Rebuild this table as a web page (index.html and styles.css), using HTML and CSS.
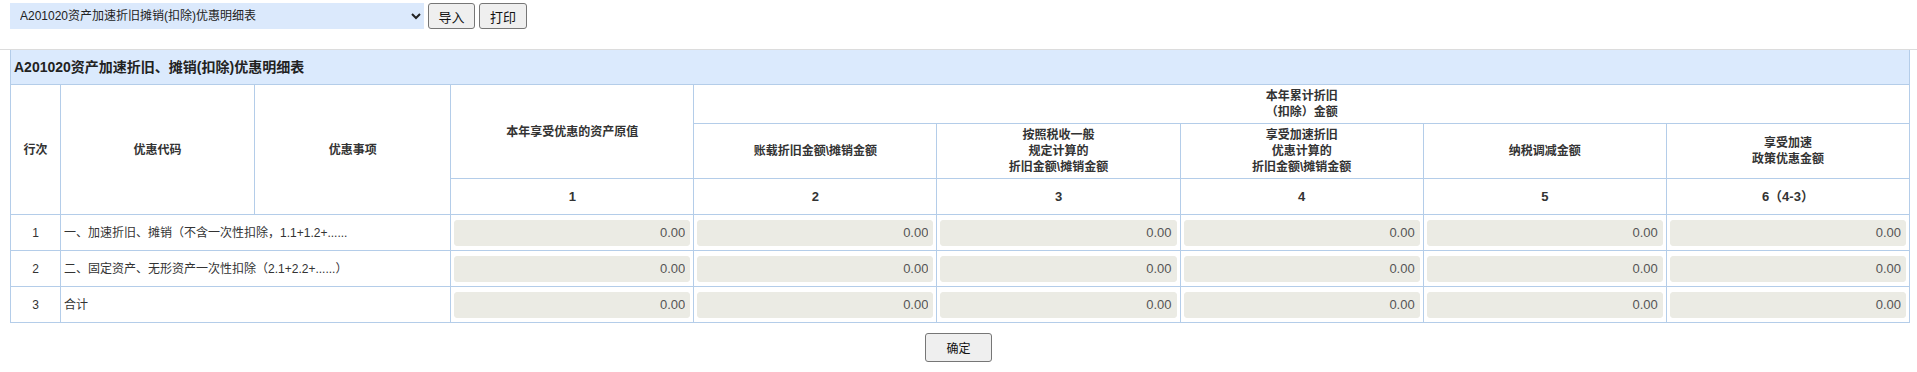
FILE: index.html
```html
<!DOCTYPE html>
<html lang="zh-CN">
<head>
<meta charset="utf-8">
<title>A201020资产加速折旧、摊销(扣除)优惠明细表</title>
<link rel="stylesheet" href="styles.css">
</head>
<body>
<div class="toolbar">
  <select class="form-select">
    <option>A201020资产加速折旧摊销(扣除)优惠明细表</option>
  </select>
  <button class="btn btn-import" type="button">导入</button>
  <button class="btn btn-print" type="button">打印</button>
</div>
<div class="sheet">
  <table class="grid">
    <colgroup>
      <col class="c-no">
      <col class="c-code">
      <col class="c-item">
      <col class="c-num">
      <col class="c-num">
      <col class="c-num">
      <col class="c-num">
      <col class="c-num">
      <col class="c-num">
    </colgroup>
    <thead>
      <tr class="r-title">
        <th colspan="9" class="title">A201020资产加速折旧、摊销(扣除)优惠明细表</th>
      </tr>
      <tr class="r-h1">
        <th rowspan="3">行次</th>
        <th rowspan="3">优惠代码</th>
        <th rowspan="3">优惠事项</th>
        <th rowspan="2">本年享受优惠的资产原值</th>
        <th colspan="5">本年累计折旧<br>（扣除）金额</th>
      </tr>
      <tr class="r-h2">
        <th>账载折旧金额\摊销金额</th>
        <th>按照税收一般<br>规定计算的<br>折旧金额\摊销金额</th>
        <th>享受加速折旧<br>优惠计算的<br>折旧金额\摊销金额</th>
        <th>纳税调减金额</th>
        <th>享受加速<br>政策优惠金额</th>
      </tr>
      <tr class="r-h3">
        <th>1</th>
        <th>2</th>
        <th>3</th>
        <th>4</th>
        <th>5</th>
        <th>6（4-3）</th>
      </tr>
    </thead>
    <tbody>
      <tr class="r-data">
        <td class="no">1</td>
        <td colspan="2" class="label">一、加速折旧、摊销（不含一次性扣除，1.1+1.2+......</td>
        <td><input class="amt" type="text" value="0.00" disabled></td>
        <td><input class="amt" type="text" value="0.00" disabled></td>
        <td><input class="amt" type="text" value="0.00" disabled></td>
        <td><input class="amt" type="text" value="0.00" disabled></td>
        <td><input class="amt" type="text" value="0.00" disabled></td>
        <td><input class="amt" type="text" value="0.00" disabled></td>
      </tr>
      <tr class="r-data">
        <td class="no">2</td>
        <td colspan="2" class="label">二、固定资产、无形资产一次性扣除（2.1+2.2+......）</td>
        <td><input class="amt" type="text" value="0.00" disabled></td>
        <td><input class="amt" type="text" value="0.00" disabled></td>
        <td><input class="amt" type="text" value="0.00" disabled></td>
        <td><input class="amt" type="text" value="0.00" disabled></td>
        <td><input class="amt" type="text" value="0.00" disabled></td>
        <td><input class="amt" type="text" value="0.00" disabled></td>
      </tr>
      <tr class="r-data">
        <td class="no">3</td>
        <td colspan="2" class="label">合计</td>
        <td><input class="amt" type="text" value="0.00" disabled></td>
        <td><input class="amt" type="text" value="0.00" disabled></td>
        <td><input class="amt" type="text" value="0.00" disabled></td>
        <td><input class="amt" type="text" value="0.00" disabled></td>
        <td><input class="amt" type="text" value="0.00" disabled></td>
        <td><input class="amt" type="text" value="0.00" disabled></td>
      </tr>
    </tbody>
  </table>
  <div class="actions">
    <button class="btn btn-ok" type="button">确定</button>
  </div>
</div>
</body>
</html>
```

FILE: styles.css
```css
html, body {
  margin: 0;
  padding: 0;
  background: #fff;
}
body {
  font-family: "Liberation Sans", "Noto Sans CJK SC", sans-serif;
  font-size: 12px;
  color: #333;
}
.toolbar {
  display: flex;
  align-items: center;
  gap: 4px;
  padding: 3px 0 0 10px;
  height: 26px;
}
.form-select {
  width: 414px;
  height: 26px;
  border: none;
  background-color: #dbe9fc;
  font-family: "Liberation Sans", "Noto Sans CJK SC", sans-serif;
  font-size: 12px;
  color: #222;
  padding: 0 4px 0 6px;
  margin: 0;
  border-radius: 0;
}
.btn {
  height: 26px;
  padding: 0 10px;
  margin: 0;
  background: #efefef;
  border: 1px solid #767676;
  border-radius: 3px;
  font-family: "Liberation Sans", "Noto Sans CJK SC", sans-serif;
  font-size: 13px;
  color: #111;
}
.btn-import { width: 47px; padding: 0; }
.btn-print { width: 48px; padding: 0; }
.sheet {
  margin-top: 20px;
  border-top: 1px solid #dcdcdc;
}
.grid {
  margin-left: 10px;
  width: 1900px;
  table-layout: fixed;
  border-collapse: collapse;
}
.c-no { width: 50px; }
.c-code { width: 194px; }
.c-item { width: 196px; }
.c-num { width: 243px; }
.grid th, .grid td {
  border: 1px solid #b4cde9;
  padding: 0 3px;
  line-height: 16px;
}
.grid th {
  font-weight: bold;
  color: #333;
  text-align: center;
  vertical-align: middle;
}
.grid .title {
  border-top: none;
  background: #dbeafd;
  text-align: left;
  font-size: 14px;
  color: #222;
  padding-left: 3px;
  height: 34px;
}
.r-h1 th { height: 38px; }
.r-h2 th { height: 54px; }
.r-h3 th { height: 35px; font-size: 13px; }
.r-data td { height: 35px; padding: 0 3px; }
.grid td.no { text-align: center; }
.grid td.label { text-align: left; }
.amt {
  display: block;
  box-sizing: border-box;
  width: 100%;
  height: 26px;
  margin: 0;
  padding: 0 4px;
  border: 1px solid #ebebe4;
  border-radius: 3px;
  background: #ebebe4;
  text-align: right;
  font-family: "Liberation Sans", "Noto Sans CJK SC", sans-serif;
  font-size: 13px;
  color: #555;
}
.actions {
  display: flex;
  justify-content: center;
  padding-top: 10px;
}
.btn-ok {
  width: 67px;
  height: 29px;
  padding: 0;
  font-size: 12px;
  color: #111;
}
```
